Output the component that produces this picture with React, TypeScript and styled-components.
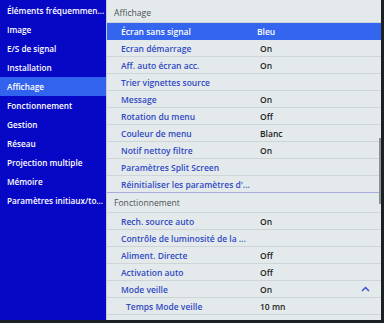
import styled, { createGlobalStyle } from "styled-components";

const GlobalStyle = createGlobalStyle`
  body {
    margin: 0;
    background: #1d2023;
    font-family: "Open Sans", "Noto Sans", sans-serif;
  }
`;

const Screen = styled.div`
  position: relative;
  display: flex;
  width: 381px;
  height: 320px;
  overflow: hidden;
  background: #e4eaeb;
`;

const Sidebar = styled.nav`
  width: 106px;
  flex-shrink: 0;
  padding-top: 1px;
  background: #0707c6;
`;

const SideItem = styled.div<{ $active?: boolean }>`
  height: 19px;
  display: flex;
  align-items: center;
  padding-left: 7px;
  font-size: 8.2px;
  font-weight: 600;
  color: #ffffff;
  white-space: nowrap;
  overflow: hidden;
  background: ${(p) => (p.$active ? "#3263ee" : "transparent")};
`;

const Panel = styled.div`
  flex: 1;
  min-width: 0;
  padding-top: 3px;
  border-left: 1px solid #c3cbd3;
`;

const Section = styled.div`
  border-bottom: 1px solid #a8acdf;
`;

const SectionTitle = styled.div`
  height: 19px;
  display: flex;
  align-items: center;
  padding-left: 7px;
  font-size: 8.6px;
  color: #4a5258;
  border-bottom: 1px solid #cdd5d7;
`;

const Row = styled.div<{ $selected?: boolean; $indent?: boolean }>`
  height: 16px;
  display: grid;
  grid-template-columns: ${(p) => (p.$indent ? "134px" : "139px")} 1fr 20px;
  align-items: center;
  padding-left: ${(p) => (p.$indent ? "19px" : "14px")};
  font-size: 8.5px;
  font-weight: 600;
  background: ${(p) => (p.$selected ? "#3465ef" : "transparent")};
  border-bottom: 1px solid ${(p) => (p.$selected ? "#3465ef" : "#cdd5d7")};
  &:last-child {
    border-bottom: none;
  }
`;

const Label = styled.span<{ $selected?: boolean }>`
  color: ${(p) => (p.$selected ? "#ffffff" : "#3049c4")};
  white-space: nowrap;
`;

const Value = styled.span<{ $selected?: boolean }>`
  color: ${(p) => (p.$selected ? "#ffffff" : "#1e1e1e")};
  margin-left: ${(p) => (p.$selected ? "-3px" : "0")};
`;

const Chevron = styled.svg`
  width: 9px;
  height: 6px;
`;

const ScrollThumb = styled.div`
  position: absolute;
  right: 0;
  top: 138px;
  width: 2px;
  height: 66px;
  background: #8b9397;
`;

const menu = [
  "Éléments fréquemmen...",
  "Image",
  "E/S de signal",
  "Installation",
  "Affichage",
  "Fonctionnement",
  "Gestion",
  "Réseau",
  "Projection multiple",
  "Mémoire",
  "Paramètres initiaux/to...",
];

type Item = { label: string; value?: string; indent?: boolean; open?: boolean };

const affichage: Item[] = [
  { label: "Écran sans signal", value: "Bleu" },
  { label: "Ecran démarrage", value: "On" },
  { label: "Aff. auto écran acc.", value: "On" },
  { label: "Trier vignettes source" },
  { label: "Message", value: "On" },
  { label: "Rotation du menu", value: "Off" },
  { label: "Couleur de menu", value: "Blanc" },
  { label: "Notif nettoy filtre", value: "On" },
  { label: "Paramètres Split Screen" },
  { label: "Réinitialiser les paramètres d'..." },
];

const fonctionnement: Item[] = [
  { label: "Rech. source auto", value: "On" },
  { label: "Contrôle de luminosité de la ..." },
  { label: "Aliment. Directe", value: "Off" },
  { label: "Activation auto", value: "Off" },
  { label: "Mode veille", value: "On", open: true },
  { label: "Temps Mode veille", value: "10 mn", indent: true },
  { label: "Veille rapide", value: "On", indent: true },
];

function App() {
  return (
    <>
      <GlobalStyle />
      <Screen>
        <Sidebar>
          {menu.map((m) => (
            <SideItem key={m} $active={m === "Affichage"}>
              {m}
            </SideItem>
          ))}
        </Sidebar>
        <Panel>
          <Section>
            <SectionTitle>Affichage</SectionTitle>
            {affichage.map((it, i) => (
              <Row key={it.label} $selected={i === 0}>
                <Label $selected={i === 0}>{it.label}</Label>
                <Value $selected={i === 0}>{it.value}</Value>
              </Row>
            ))}
          </Section>
          <SectionTitle>Fonctionnement</SectionTitle>
          {fonctionnement.map((it, i) => (
            <Row key={i} $indent={it.indent}>
              <Label>{it.label}</Label>
              <Value>{it.value}</Value>
              {it.open && (
                <Chevron viewBox="0 0 9 6">
                  <path d="M1 5 L4.5 1.5 L8 5" fill="none" stroke="#3a56d0" strokeWidth="1.5" />
                </Chevron>
              )}
            </Row>
          ))}
        </Panel>
        <ScrollThumb />
      </Screen>
    </>
  );
}

export default App;
